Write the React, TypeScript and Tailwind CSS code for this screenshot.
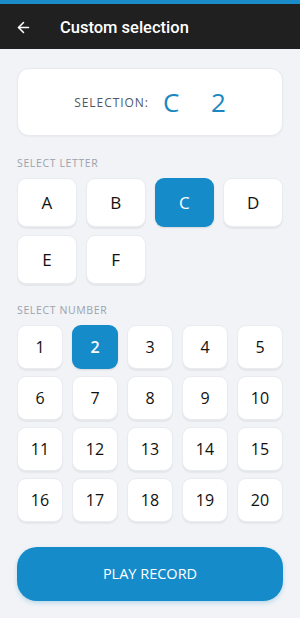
import { ArrowLeft } from "lucide-react";

const letters = ["A", "B", "C", "D", "E", "F"];
const numbers = Array.from({ length: 20 }, (_, i) => i + 1);

export default function App() {
  const selectedLetter = "C";
  const selectedNumber = 2;

  return (
    <div className="w-[300px] h-[618px] bg-[#f1f3f6] flex flex-col font-['Open_Sans',sans-serif] overflow-hidden">
      <div className="h-[4px] bg-[#1a8cca]" />
      <div className="h-[45px] bg-[#202020] flex items-center pl-[15px] gap-[28px]">
        <ArrowLeft className="w-[17px] h-[17px] text-white mt-[1px]" strokeWidth={2.2} />
        <span className="text-white text-[16.5px] font-medium font-['Roboto',sans-serif] mt-[3px]">
          Custom selection
        </span>
      </div>

      <div className="px-[17px] pt-[19px] flex flex-col">
        <div className="h-[68px] bg-white rounded-[12px] border border-[#e6e9ee] shadow-[0_1px_2px_rgba(0,0,0,0.04)] flex items-center justify-center">
          <span className="text-[12px] tracking-[0.08em] text-[#4f586a] mr-[14px] mt-[2px]">
            SELECTION:
          </span>
          <span className="text-[26px] font-medium text-[#1a87c2] leading-none w-[48px] text-left">C</span>
          <span className="text-[26px] font-medium text-[#1a87c2] leading-none">2</span>
        </div>

        <div className="mt-[20px] text-[10.5px] tracking-[0.06em] text-[#9ba2ae]">SELECT LETTER</div>
        <div className="mt-[6px] grid grid-cols-4 gap-x-[9px] gap-y-[8px]">
          {letters.map((l) => {
            const active = l === selectedLetter;
            return (
              <div
                key={l}
                className={
                  active
                    ? "h-[49px] rounded-[9px] bg-[#168bca] text-white flex items-center justify-center text-[17px] shadow-[0_1px_2px_rgba(0,0,0,0.12)]"
                    : "h-[49px] rounded-[9px] bg-white border border-[#e8ebef] text-[#111] flex items-center justify-center text-[17px] shadow-[0_2px_1px_rgba(0,0,0,0.05)]"
                }
              >
                {l}
              </div>
            );
          })}
        </div>

        <div className="mt-[19px] text-[10.5px] tracking-[0.06em] text-[#9ba2ae]">SELECT NUMBER</div>
        <div className="mt-[6px] grid grid-cols-5 gap-x-[9px] gap-y-[7px]">
          {numbers.map((n) => {
            const active = n === selectedNumber;
            return (
              <div
                key={n}
                className={
                  active
                    ? "h-[44px] rounded-[9px] bg-[#168bca] text-white flex items-center justify-center text-[16px] font-semibold shadow-[0_1px_2px_rgba(0,0,0,0.12)]"
                    : "h-[44px] rounded-[9px] bg-white border border-[#e8ebef] text-[#111] flex items-center justify-center text-[16px] shadow-[0_2px_1px_rgba(0,0,0,0.05)]"
                }
              >
                {n}
              </div>
            );
          })}
        </div>

        <button className="mt-[25px] h-[54px] rounded-[20px] bg-[#168bca] text-white text-[14.5px] shadow-[0_2px_4px_rgba(22,139,202,0.25)]">
          PLAY RECORD
        </button>
      </div>
    </div>
  );
}
